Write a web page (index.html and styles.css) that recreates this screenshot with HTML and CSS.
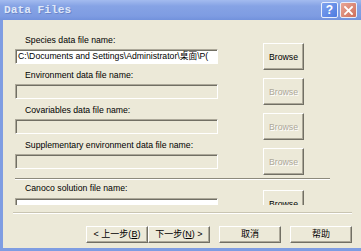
FILE: index.html
```html
<!DOCTYPE html>
<html lang="zh">
<head>
    <meta charset="UTF-8">
    <meta name="viewport" content="width=device-width, initial-scale=1.0">
    <title>Data Files</title>
    <link rel="stylesheet" href="styles.css">
</head>
<body>

    <div class="window">
        <div class="titlebar">
            <span class="title">Data Files</span>
            <div class="caption-buttons">
                <span class="cap-btn help">?</span>
                <span class="cap-btn close">
                    <svg width="9" height="9" viewBox="0 0 9 9">
                        <path d="M1 1 L8 8 M8 1 L1 8" stroke="#fff" stroke-width="1.8" stroke-linecap="square"/>
                    </svg>
                </span>
            </div>
        </div>

        <div class="body">
            <div class="files">
                <div class="file-row">
                    <div class="label">Species data file name:</div>
                    <div class="field">
                        <div class="textbox">C:\Documents and Settings\Administrator\桌面\P(</div>
                        <button class="browse">Browse</button>
                    </div>
                </div>
                <div class="file-row">
                    <div class="label">Environment data file name:</div>
                    <div class="field">
                        <div class="textbox disabled"></div>
                        <button class="browse" disabled>Browse</button>
                    </div>
                </div>
                <div class="file-row">
                    <div class="label">Covariables data file name:</div>
                    <div class="field">
                        <div class="textbox disabled"></div>
                        <button class="browse" disabled>Browse</button>
                    </div>
                </div>
                <div class="file-row">
                    <div class="label">Supplementary environment data file name:</div>
                    <div class="field">
                        <div class="textbox disabled"></div>
                        <button class="browse" disabled>Browse</button>
                    </div>
                </div>

                <div class="separator"></div>

                <div class="file-row canoco">
                    <div class="label">Canoco solution file name:</div>
                    <div class="field">
                        <div class="textbox"></div>
                        <button class="browse">Browse</button>
                    </div>
                </div>
            </div>

            <div class="footer">
                <div class="footer-line"></div>
                <div class="buttons">
                    <button class="nav-btn">&lt; 上一步(<u>B</u>)</button>
                    <button class="nav-btn">下一步(<u>N</u>) &gt;</button>
                    <button class="nav-btn spaced">取消</button>
                    <button class="nav-btn spaced">帮助</button>
                </div>
            </div>
        </div>
    </div>

</body>
</html>
```

FILE: styles.css
```css
html, body {
    margin: 0;
    padding: 0;
}
body {
    width: 361px;
    height: 251px;
    overflow: hidden;
    font-family: "Liberation Sans", "Noto Sans CJK SC", sans-serif;
    font-size: 8.7px;
    color: #000;
}
.window {
    width: 361px;
    height: 251px;
    display: flex;
    flex-direction: column;
}
.titlebar {
    height: 20px;
    flex: none;
    display: flex;
    align-items: center;
    justify-content: space-between;
    background: linear-gradient(#a3bbef, #86a3e5 30%, #7e9ce2 80%, #7292dc);
}
.title {
    padding-left: 4px;
    font-family: "Liberation Mono", monospace;
    font-weight: bold;
    font-size: 11.2px;
    color: #dfe7f8;
    text-shadow: 1px 1px 0 #6b86c9;
}
.caption-buttons {
    display: flex;
    gap: 2px;
    padding-right: 4px;
}
.cap-btn {
    width: 15px;
    height: 14px;
    border: 1px solid #e8eefc;
    border-radius: 2px;
    display: flex;
    align-items: center;
    justify-content: center;
    color: #fff;
    font-family: "Liberation Sans", sans-serif;
    font-weight: bold;
    font-size: 12px;
}
.help {
    background: linear-gradient(135deg, #7fa3ef, #4d7ae0);
}
.close {
    background: linear-gradient(135deg, #e8a696, #cf6f5c);
}
.body {
    flex: 1;
    background: #ece9d8;
    border-left: 3px solid #7f9de2;
    border-bottom: 3px solid #7f9de2;
    display: flex;
    flex-direction: column;
}
.files {
    height: 185px;
    overflow: hidden;
    padding: 14px 0 0 12px;
    box-sizing: border-box;
    flex: none;
}
.file-row {
    margin-bottom: 5px;
}
.label {
    height: 12px;
    line-height: 12px;
    padding-left: 10px;
    margin-bottom: 3px;
    white-space: nowrap;
}
.canoco .label {
    margin-bottom: 4px;
}
.field {
    display: flex;
    align-items: center;
    height: 15px;
}
.textbox {
    width: 203px;
    height: 15px;
    box-sizing: border-box;
    background: #fff;
    border: 1px solid;
    border-color: #aca899 #fff #fff #aca899;
    box-shadow: inset 1px 1px 0 #716f64;
    padding: 0 2px;
    line-height: 13px;
    white-space: nowrap;
    overflow: hidden;
}
.textbox.disabled {
    background: #ece9d8;
}
.browse {
    width: 41px;
    height: 27px;
    margin: -6px 0 -6px 45px;
    padding: 0;
    background: #ece9d8;
    border: 1px solid;
    border-color: #fff #716f64 #716f64 #fff;
    box-shadow: inset -1px -1px 0 #aca899;
    font-family: inherit;
    font-size: 8.7px;
    color: #000;
}
.canoco .browse {
    margin: -8px 0 -4px 45px;
}
.browse:disabled {
    color: #aca899;
    text-shadow: 1px 1px 0 #fff;
}
.separator {
    width: 315px;
    height: 0;
    border-top: 1px solid #8d8a7c;
    border-bottom: 1px solid #fff;
    margin: 9px 0 2px 0;
}
.footer {
    flex: 1;
    display: flex;
    flex-direction: column;
}
.footer-line {
    margin: 7px 9px 0 10px;
    border-top: 1px solid #c9c5b2;
    border-bottom: 1px solid #fff;
}
.buttons {
    display: flex;
    justify-content: flex-end;
    padding: 12px 9px 0 0;
}
.nav-btn {
    width: 62px;
    height: 17px;
    padding: 0;
    background: #ece9d8;
    border: 1px solid;
    border-color: #fff #716f64 #716f64 #fff;
    box-shadow: inset -1px -1px 0 #aca899;
    font-family: "Liberation Sans", "Noto Sans CJK SC", sans-serif;
    font-size: 9px;
    line-height: 15px;
    color: #000;
}
.nav-btn.spaced {
    margin-left: 9px;
}
```
